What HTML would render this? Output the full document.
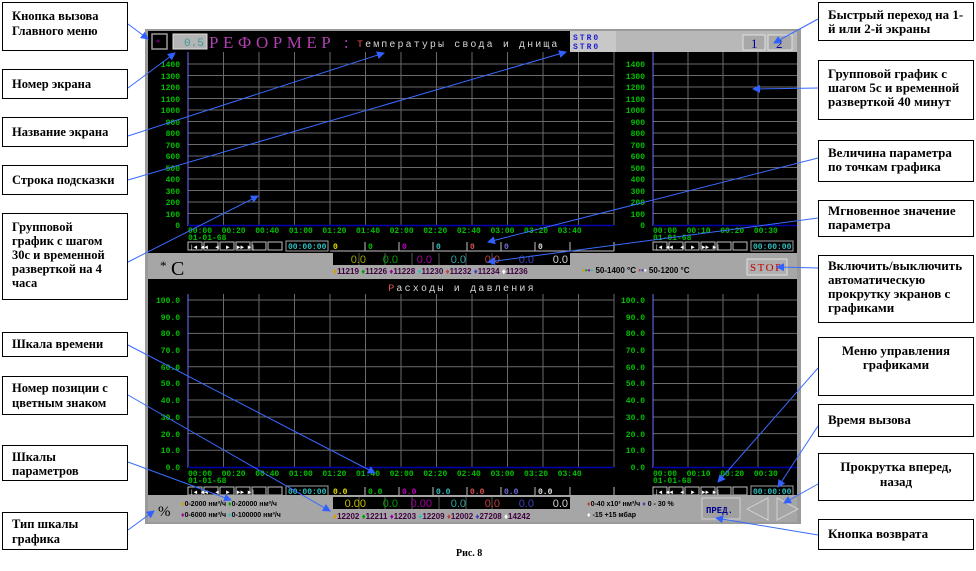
<!DOCTYPE html>
<html><head><meta charset="utf-8"><style>
html,body{margin:0;padding:0;background:#fff;width:976px;height:571px;overflow:hidden}
svg{display:block}
.c{font-family:"Liberation Serif",serif;font-weight:bold;font-size:12.5px;fill:#000}
.cr{font-size:13px}
.g{font-family:"Liberation Mono",monospace;font-weight:bold;font-size:8px;fill:#00c000}
.m{font-family:"Liberation Mono",monospace;font-size:8px;font-weight:bold}
</style></head><body>
<svg width="976" height="571" viewBox="0 0 976 571" xmlns="http://www.w3.org/2000/svg">
<rect width="976" height="571" fill="#fff"/>
<rect x="145" y="29" width="656" height="495" fill="#9a9a9a"/>
<rect x="148" y="31" width="422" height="21" fill="#000"/>
<rect x="570" y="31" width="46" height="21" fill="#c8c8c8"/>
<text x="573" y="40" class="m" fill="#2020d0" letter-spacing="2">STR0</text>
<text x="573" y="49" class="m" fill="#2020d0" letter-spacing="2">STR0</text>
<rect x="616" y="31" width="181" height="21" fill="#b8b8b8"/>
<rect x="743" y="35" width="22" height="15" fill="#a8a8a8" stroke="#e0e0e0"/>
<text x="751" y="48" font-family="Liberation Serif" font-size="13" fill="#0000a0">1</text>
<rect x="768" y="35" width="24" height="15" fill="#a8a8a8" stroke="#e0e0e0"/>
<text x="776" y="48" font-family="Liberation Serif" font-size="13" fill="#0000a0">2</text>
<rect x="152" y="34" width="15" height="15" fill="#000" stroke="#9a9a9a" stroke-width="1.5"/>
<text x="156" y="45" font-size="8" fill="#c000c0">*</text>
<rect x="173" y="34" width="34" height="15" fill="#b4b4b4" stroke="#e0e0e0"/>
<text x="184" y="46" font-family="Liberation Mono" font-size="11" fill="#3a9a9a">0.5</text>
<text x="209" y="48" font-family="Liberation Serif" font-size="17" fill="#b040b0" letter-spacing="4.5">РЕФОРМЕР :</text>
<text x="357" y="47" font-family="Liberation Mono" font-size="10" fill="#d8d8d8" letter-spacing="2.1"><tspan fill="#e05050">Т</tspan>емпературы свода и днища</text>
<rect x="148" y="52" width="649" height="201" fill="#000"/>
<g stroke="#6a6a6a" stroke-width="1">
<path d="M188 64H614M188 75.5H614M188 87H614M188 98.5H614M188 110H614M188 121.5H614M188 133H614M188 144.5H614M188 156H614M188 167.5H614M188 179H614M188 190.5H614M188 202H614M188 213.5H614"/>
<path d="M223.5 52V225M259 52V225M294.5 52V225M330 52V225M365.5 52V225M401 52V225M436.5 52V225M472 52V225M507.5 52V225M543 52V225M578.5 52V225M614 52V225"/>
<path d="M653 64H797M653 75.5H797M653 87H797M653 98.5H797M653 110H797M653 121.5H797M653 133H797M653 144.5H797M653 156H797M653 167.5H797M653 179H797M653 190.5H797M653 202H797M653 213.5H797"/>
<path d="M688 52V225M723 52V225M758 52V225"/>
</g>
<path d="M188 52V226M653 52V226" stroke="#7070ff"/>
<path d="M188 225.5H614M653 225.5H797" stroke="#0000b0" stroke-width="1.5"/>
<g class="g" text-anchor="end">
<text x="180" y="67">1400</text><text x="180" y="79">1300</text><text x="180" y="90">1200</text><text x="180" y="102">1100</text><text x="180" y="113">1000</text><text x="180" y="125">900</text><text x="180" y="136">800</text><text x="180" y="148">700</text><text x="180" y="159">600</text><text x="180" y="171">500</text><text x="180" y="182">400</text><text x="180" y="194">300</text><text x="180" y="205">200</text><text x="180" y="217">100</text><text x="180" y="228">0</text>
<text x="645" y="67">1400</text><text x="645" y="79">1300</text><text x="645" y="90">1200</text><text x="645" y="102">1100</text><text x="645" y="113">1000</text><text x="645" y="125">900</text><text x="645" y="136">800</text><text x="645" y="148">700</text><text x="645" y="159">600</text><text x="645" y="171">500</text><text x="645" y="182">400</text><text x="645" y="194">300</text><text x="645" y="205">200</text><text x="645" y="217">100</text><text x="645" y="228">0</text>
</g>
<text x="188" y="233" class="g" xml:space="preserve">00:00  00:20  00:40  01:00  01:20  01:40  02:00  02:20  02:40  03:00  03:20  03:40</text>
<text x="188" y="240" class="g">01-01-68</text>
<text x="653" y="233" class="g" xml:space="preserve">00:00  00:10  00:20  00:30</text>
<text x="653" y="240" class="g">01-01-68</text>
<g id="ctl">
<g fill="#000" stroke="#c0c0c0">
<rect x="188" y="242" width="14" height="8"/><rect x="204" y="242" width="14" height="8"/><rect x="220" y="242" width="14" height="8"/><rect x="236" y="242" width="14" height="8"/><rect x="252" y="242" width="14" height="8"/><rect x="268" y="242" width="14" height="8"/>
</g>
<text x="190" y="249" font-size="6" fill="#fff" font-family="Liberation Mono" xml:space="preserve">|◄ ◄◄  ◄  ►  ►► ►|</text>
<rect x="286" y="241" width="42" height="10" fill="#000" stroke="#a0a0a0"/>
<text x="288" y="249" class="g" style="fill:#30c0c0">00:00:00</text>
</g>
<g class="m">
<text x="333" y="249" fill="#e0e000">0</text><text x="368" y="249" fill="#00c000">0</text><text x="402" y="249" fill="#c000c0">0</text><text x="436" y="249" fill="#30c0c0">0</text><text x="470" y="249" fill="#e05050">0</text><text x="504" y="249" fill="#7070e0">0</text><text x="538" y="249" fill="#e0e0e0">0</text>
</g>
<path d="M365 242V251M399 242V251M433 242V251M467 242V251M501 242V251M535 242V251M570 242V251M614 242V251M330 251H614" stroke="#c0c0c0"/>
<use href="#ctl" x="465" y="0"/>
<rect x="148" y="253" width="649" height="26" fill="#a6a6a6"/>
<text x="160" y="270" font-family="Liberation Serif" font-size="13" fill="#000">*</text>
<text x="171" y="275" font-family="Liberation Serif" font-size="20" fill="#000">C</text>
<rect x="333" y="253" width="237" height="12" fill="#000"/>
<path d="M359 253V265M385 253V265M412 253V265M439 253V265M466 253V265M492 253V265" stroke="#555"/>
<g font-family="Liberation Sans" font-size="11" text-anchor="end">
<text x="366" y="263" fill="#a0a000">0.0</text><text x="398" y="263" fill="#00a000">0.0</text><text x="432" y="263" fill="#a000a0">0.0</text><text x="466" y="263" fill="#30a0a0">0.0</text><text x="500" y="263" fill="#c04040">0.0</text><text x="534" y="263" fill="#4040c0">0.0</text><text x="568" y="263" fill="#d0d0d0">0.0</text>
</g>
<g font-family="Liberation Sans" font-size="8" font-weight="bold" fill="#400040">
<text x="333" y="274"><tspan fill="#d0a000">♦</tspan>11219 <tspan fill="#00a000">♦</tspan>11226 <tspan fill="#a000a0">♦</tspan>11228 <tspan fill="#30c0c0">♦</tspan>11230 <tspan fill="#c04040">♦</tspan>11232 <tspan fill="#4040c0">♦</tspan>11234 <tspan fill="#fff">♦</tspan>11236</text>
<text x="582" y="273" fill="#000"><tspan fill="#d0a000">•</tspan><tspan fill="#00a000">•</tspan><tspan fill="#a000a0">•</tspan><tspan fill="#30c0c0">•</tspan>  50-1400 °C   <tspan fill="#c04040">•</tspan><tspan fill="#4040c0">•</tspan><tspan fill="#fff">•</tspan>  50-1200 °C</text>
</g>
<rect x="747" y="259" width="40" height="16" fill="#b0b0b0" stroke="#e0e0e0"/>
<text x="750" y="271" font-family="Liberation Serif" font-size="11" fill="#c00000" letter-spacing="1.5">STOP</text>
<rect x="148" y="279" width="649" height="15" fill="#000"/>
<text x="462" y="291" text-anchor="middle" font-family="Liberation Mono" font-size="10" fill="#d8d8d8" letter-spacing="2.2"><tspan fill="#e05050">Р</tspan>асходы и давления</text>
<rect x="148" y="294" width="649" height="201" fill="#000"/>
<g stroke="#6a6a6a">
<path d="M188 300H614M188 316.7H614M188 333.4H614M188 350H614M188 366.8H614M188 383.5H614M188 400H614M188 417H614M188 433.6H614M188 450.3H614"/>
<path d="M223.5 294V467M259 294V467M294.5 294V467M330 294V467M365.5 294V467M401 294V467M436.5 294V467M472 294V467M507.5 294V467M543 294V467M578.5 294V467M614 294V467"/>
<path d="M653 300H797M653 316.7H797M653 333.4H797M653 350H797M653 366.8H797M653 383.5H797M653 400H797M653 417H797M653 433.6H797M653 450.3H797"/>
<path d="M688 294V467M723 294V467M758 294V467"/>
</g>
<path d="M188 294V468M653 294V468" stroke="#7070ff"/>
<path d="M188 467.5H614M653 467.5H797" stroke="#0000b0" stroke-width="1.5"/>
<g class="g" text-anchor="end">
<text x="180" y="303">100.0</text><text x="180" y="320">90.0</text><text x="180" y="336">80.0</text><text x="180" y="353">70.0</text><text x="180" y="370">60.0</text><text x="180" y="386">50.0</text><text x="180" y="403">40.0</text><text x="180" y="420">30.0</text><text x="180" y="437">20.0</text><text x="180" y="453">10.0</text><text x="180" y="470">0.0</text>
<text x="645" y="303">100.0</text><text x="645" y="320">90.0</text><text x="645" y="336">80.0</text><text x="645" y="353">70.0</text><text x="645" y="370">60.0</text><text x="645" y="386">50.0</text><text x="645" y="403">40.0</text><text x="645" y="420">30.0</text><text x="645" y="437">20.0</text><text x="645" y="453">10.0</text><text x="645" y="470">0.0</text>
</g>
<text x="188" y="476" class="g" xml:space="preserve">00:00  00:20  00:40  01:00  01:20  01:40  02:00  02:20  02:40  03:00  03:20  03:40</text>
<text x="188" y="483" class="g">01-01-68</text>
<text x="653" y="476" class="g" xml:space="preserve">00:00  00:10  00:20  00:30</text>
<text x="653" y="483" class="g">01-01-68</text>
<use href="#ctl" x="0" y="245"/>
<use href="#ctl" x="465" y="245"/>
<g class="m">
<text x="333" y="494" fill="#e0e000">0.0</text><text x="368" y="494" fill="#00c000">0.0</text><text x="402" y="494" fill="#c000c0">0.0</text><text x="436" y="494" fill="#30c0c0">0.0</text><text x="470" y="494" fill="#e05050">0.0</text><text x="504" y="494" fill="#7070e0">0.0</text><text x="538" y="494" fill="#e0e0e0">0.0</text>
</g>
<path d="M365 487V496M399 487V496M433 487V496M467 487V496M501 487V496M535 487V496M570 487V496M614 487V496M330 496H614" stroke="#c0c0c0"/>
<rect x="148" y="495" width="649" height="27" fill="#a6a6a6"/>
<text x="158" y="516" font-family="Liberation Serif" font-size="15" fill="#000">%</text>
<g font-family="Liberation Sans" font-size="7" font-weight="bold" fill="#000">
<text x="181" y="506"><tspan fill="#d0a000">♦</tspan>0-2000 нм³/ч <tspan fill="#00a000">♦</tspan>0-20000 нм³/ч</text>
<text x="181" y="517"><tspan fill="#a000a0">♦</tspan>0-6000 нм³/ч <tspan fill="#30c0c0">♦</tspan>0-100000 нм³/ч</text>
<text x="587" y="506"><tspan fill="#c04040">♦</tspan>0-40 x10³ нм³/ч <tspan fill="#4040c0">♦</tspan> 0 - 30 %</text>
<text x="587" y="517"><tspan fill="#fff">♦</tspan> -15 +15 мбар</text>
</g>
<rect x="333" y="497" width="237" height="12" fill="#000"/>
<path d="M359 497V509M385 497V509M412 497V509M439 497V509M466 497V509M492 497V509" stroke="#555"/>
<g font-family="Liberation Sans" font-size="11" text-anchor="end">
<text x="366" y="507" fill="#c0c000">0.00</text><text x="398" y="507" fill="#00a000">0.0</text><text x="432" y="507" fill="#a000a0">0.00</text><text x="466" y="507" fill="#30a0a0">0.0</text><text x="500" y="507" fill="#c04040">0.0</text><text x="534" y="507" fill="#4040c0">0.0</text><text x="568" y="507" fill="#d0d0d0">0.0</text>
</g>
<text x="333" y="519" font-family="Liberation Sans" font-size="8" font-weight="bold" fill="#400040"><tspan fill="#d0a000">♦</tspan>12202 <tspan fill="#00a000">♦</tspan>12211 <tspan fill="#a000a0">♦</tspan>12203 <tspan fill="#30c0c0">♦</tspan>12209 <tspan fill="#c04040">♦</tspan>12002 <tspan fill="#4040c0">♦</tspan>27208 <tspan fill="#fff">♦</tspan>14242</text>
<rect x="702" y="498" width="38" height="21" fill="#a0a0a0" stroke="#d0d0d0"/>
<text x="706" y="513" font-family="Liberation Mono" font-size="9" font-weight="bold" fill="#000090">ПРЕД.</text>
<path d="M768 498L747 509L768 520Z" fill="none" stroke="#d0d0d0"/>
<path d="M777 498L798 509L777 520Z" fill="none" stroke="#d0d0d0"/>
<g fill="#fff" stroke="#000" stroke-width="1">
<rect x="2.5" y="2.5" width="125" height="48"/>
<rect x="2.5" y="69.5" width="125" height="29"/>
<rect x="2.5" y="117.5" width="125" height="29"/>
<rect x="2.5" y="165.5" width="125" height="29"/>
<rect x="2.5" y="213.5" width="125" height="86"/>
<rect x="2.5" y="332.5" width="125" height="24"/>
<rect x="2.5" y="376.5" width="125" height="38"/>
<rect x="2.5" y="445.5" width="125" height="35"/>
<rect x="2.5" y="512.5" width="125" height="37"/>
<rect x="818.5" y="2.5" width="155" height="38"/>
<rect x="818.5" y="60.5" width="155" height="59"/>
<rect x="818.5" y="140.5" width="155" height="41"/>
<rect x="818.5" y="200.5" width="155" height="36"/>
<rect x="818.5" y="255.5" width="155" height="67"/>
<rect x="818.5" y="337.5" width="155" height="58"/>
<rect x="818.5" y="404.5" width="155" height="32"/>
<rect x="818.5" y="453.5" width="155" height="47"/>
<rect x="818.5" y="519.5" width="155" height="30"/>
</g>
<g class="c">
<text x="12" y="20">Кнопка вызова</text><text x="12" y="35">Главного меню</text>
<text x="12" y="88">Номер экрана</text>
<text x="12" y="136">Название экрана</text>
<text x="12" y="184">Строка подсказки</text>
<text x="12" y="231">Групповой</text><text x="12" y="245">график с шагом</text><text x="12" y="259">30с и временной</text><text x="12" y="273">разверткой на 4</text><text x="12" y="287">часа</text>
<text x="12" y="348">Шкала времени</text>
<text x="12" y="392">Номер позиции с</text><text x="12" y="407">цветным знаком</text>
<text x="12" y="461">Шкалы</text><text x="12" y="475">параметров</text>
<text x="12" y="528">Тип шкалы</text><text x="12" y="543">графика</text>
</g>
<g class="c cr">
<text x="828" y="19">Быстрый переход на 1-</text><text x="828" y="33">й или 2-й экраны</text>
<text x="828" y="78">Групповой график с</text><text x="828" y="92">шагом 5с и временной</text><text x="828" y="106">разверткой 40 минут</text>
<text x="828" y="157">Величина параметра</text><text x="828" y="171">по точкам графика</text>
<text x="828" y="215">Мгновенное значение</text><text x="828" y="229">параметра</text>
<text x="828" y="270">Включить/выключить</text><text x="828" y="284">автоматическую</text><text x="828" y="298">прокрутку экранов с</text><text x="828" y="312">графиками</text>
<text x="896" y="355" text-anchor="middle">Меню управления</text><text x="896" y="369" text-anchor="middle">графиками</text>
<text x="828" y="424">Время вызова</text>
<text x="896" y="471" text-anchor="middle">Прокрутка вперед,</text><text x="896" y="486" text-anchor="middle">назад</text>
<text x="828" y="538">Кнопка возврата</text>
</g>
<text x="456" y="556" font-family="Liberation Serif" font-weight="bold" font-size="10">Рис. 8</text>
<defs><marker id="a" markerWidth="8" markerHeight="8" refX="7" refY="4" orient="auto"><path d="M0 0L8 4L0 8Z" fill="#3060ff"/></marker></defs>
<g stroke="#3a6aff" stroke-width="1" fill="none" marker-end="url(#a)">
<path d="M128 24L148 39"/>
<path d="M128 88L175 53"/>
<path d="M128 136L384 53"/>
<path d="M128 180L566 52"/>
<path d="M128 262L258 196"/>
<path d="M128 345L375 473"/>
<path d="M128 395L330 511"/>
<path d="M128 462L231 500"/>
<path d="M128 530L154 511"/>
<path d="M818 19L774 43"/>
<path d="M818 88L753 89"/>
<path d="M818 158L488 242"/>
<path d="M818 218L488 262"/>
<path d="M818 268L777 267"/>
<path d="M818 368L718 482"/>
<path d="M818 426L778 487"/>
<path d="M818 484L784 503"/>
<path d="M818 535L716 518"/>
</g>
</svg>
</body></html>
